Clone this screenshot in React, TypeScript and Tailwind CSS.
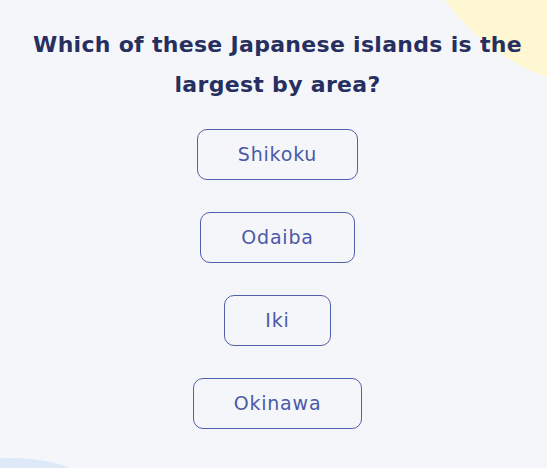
const OPTIONS = ['Shikoku', 'Odaiba', 'Iki', 'Okinawa'];

export default function App() {
  return (
    <div
      className="relative w-[547px] h-[468px] overflow-hidden bg-[#f5f6fa]"
      style={{ fontFamily: '"DejaVu Sans", "Noto Sans", sans-serif' }}
    >
      {/* decorative blobs */}
      <div className="absolute left-[405px] top-[-340px] w-[430px] h-[430px] rounded-full bg-[#fff7d1]" />
      <div className="absolute left-[-70px] top-[458px] w-[160px] h-[60px] rounded-[50%] bg-[#dde9f7]" />

      <div className="relative flex flex-col items-center pt-[25px] pl-[8px]">
        <h1 className="w-[500px] text-center text-[22px] leading-[40px] font-bold tracking-[0.3px] text-[#262f5f]">
          Which of these Japanese islands is the largest by area?
        </h1>
        <div className="mt-[24px] flex flex-col items-center gap-[32px]">
          {OPTIONS.map((opt) => (
            <button
              key={opt}
              className="h-[51px] px-[40px] rounded-[10px] border border-[#5060aa] text-[19px] tracking-[0.8px] text-[#4b5aa6] bg-transparent"
            >
              {opt}
            </button>
          ))}
        </div>
      </div>
    </div>
  );
}
